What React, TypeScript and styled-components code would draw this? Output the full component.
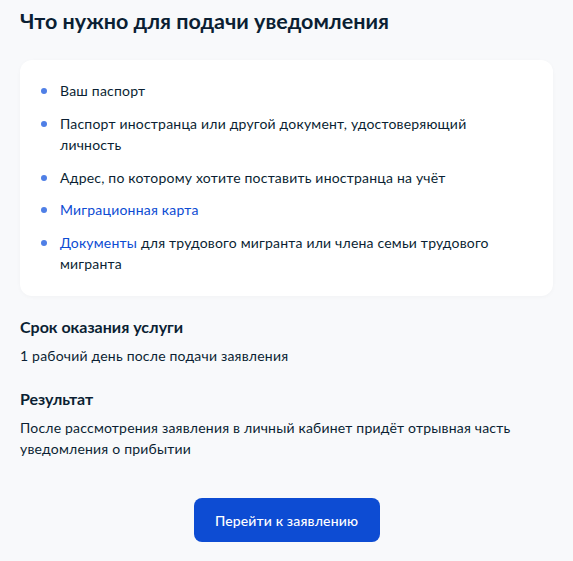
import React from 'react';
import styled, { createGlobalStyle } from 'styled-components';

const GlobalStyle = createGlobalStyle`
    html, body {
        margin: 0;
        padding: 0;
        background: #f8f9fb;
    }

    body {
        font-family: Lato, "Noto Sans", sans-serif;
        color: #0b1f33;
    }
`

const Page = styled.main`
    padding: 6px 20px 0;
    width: 573px;
    box-sizing: border-box;
`

const Title = styled.h2`
    margin: 0;
    font-size: 21.5px;
    line-height: 30px;
    font-weight: 700;
`

const Card = styled.section`
    margin-top: 24px;
    background: #fff;
    border-radius: 12px;
    padding: 20px 24px 22px;
    box-shadow: 0 1px 4px rgba(0, 0, 0, 0.03);
`

const List = styled.ul`
    list-style: none;
    margin: 0;
    padding: 0;
    display: flex;
    flex-direction: column;
    gap: 11.75px;
`

const Item = styled.li`
    position: relative;
    padding-left: 16px;
    font-size: 14px;
    line-height: 21px;
    letter-spacing: 0.2px;

    &::before {
        content: '';
        position: absolute;
        left: -3px;
        top: 8px;
        width: 6px;
        height: 6px;
        border-radius: 50%;
        background: #4f7fe6;
    }
`

const Link = styled.a`
    color: #0d4cd3;
    text-decoration: none;
`

const Block = styled.div`
    margin-top: 19px;

    & + & {
        margin-top: 21px;
    }
`

const SubTitle = styled.h3`
    margin: 0;
    font-size: 16px;
    line-height: 24px;
    font-weight: 700;
`

const Text = styled.p`
    margin: 6px 0 0;
    font-size: 14px;
    line-height: 21px;
    letter-spacing: 0.2px;
`

const Actions = styled.div`
    display: flex;
    justify-content: center;
    margin-top: 39px;
`

const Button = styled.button`
    height: 44px;
    width: 186px;
    border: none;
    border-radius: 8px;
    background: #0d4cd3;
    color: #fff;
    font-family: Lato, "Noto Sans", sans-serif;
    font-size: 14px;
    font-weight: 500;
    letter-spacing: 0.15px;
    cursor: pointer;
`

const App: React.FC = () => {
    return (
        <>
            <GlobalStyle />
            <Page>
                <Title>Что нужно для подачи уведомления</Title>
                <Card>
                    <List>
                        <Item>Ваш паспорт</Item>
                        <Item>Паспорт иностранца или другой документ, удостоверяющий личность</Item>
                        <Item>Адрес, по которому хотите поставить иностранца на учёт</Item>
                        <Item><Link href="#">Миграционная карта</Link></Item>
                        <Item><Link href="#">Документы</Link> для трудового мигранта или члена семьи трудового мигранта</Item>
                    </List>
                </Card>
                <Block>
                    <SubTitle>Срок оказания услуги</SubTitle>
                    <Text>1 рабочий день после подачи заявления</Text>
                </Block>
                <Block>
                    <SubTitle>Результат</SubTitle>
                    <Text>После рассмотрения заявления в личный кабинет придёт отрывная часть уведомления о прибытии</Text>
                </Block>
                <Actions>
                    <Button>Перейти к заявлению</Button>
                </Actions>
            </Page>
        </>
    );
};

export default App;
